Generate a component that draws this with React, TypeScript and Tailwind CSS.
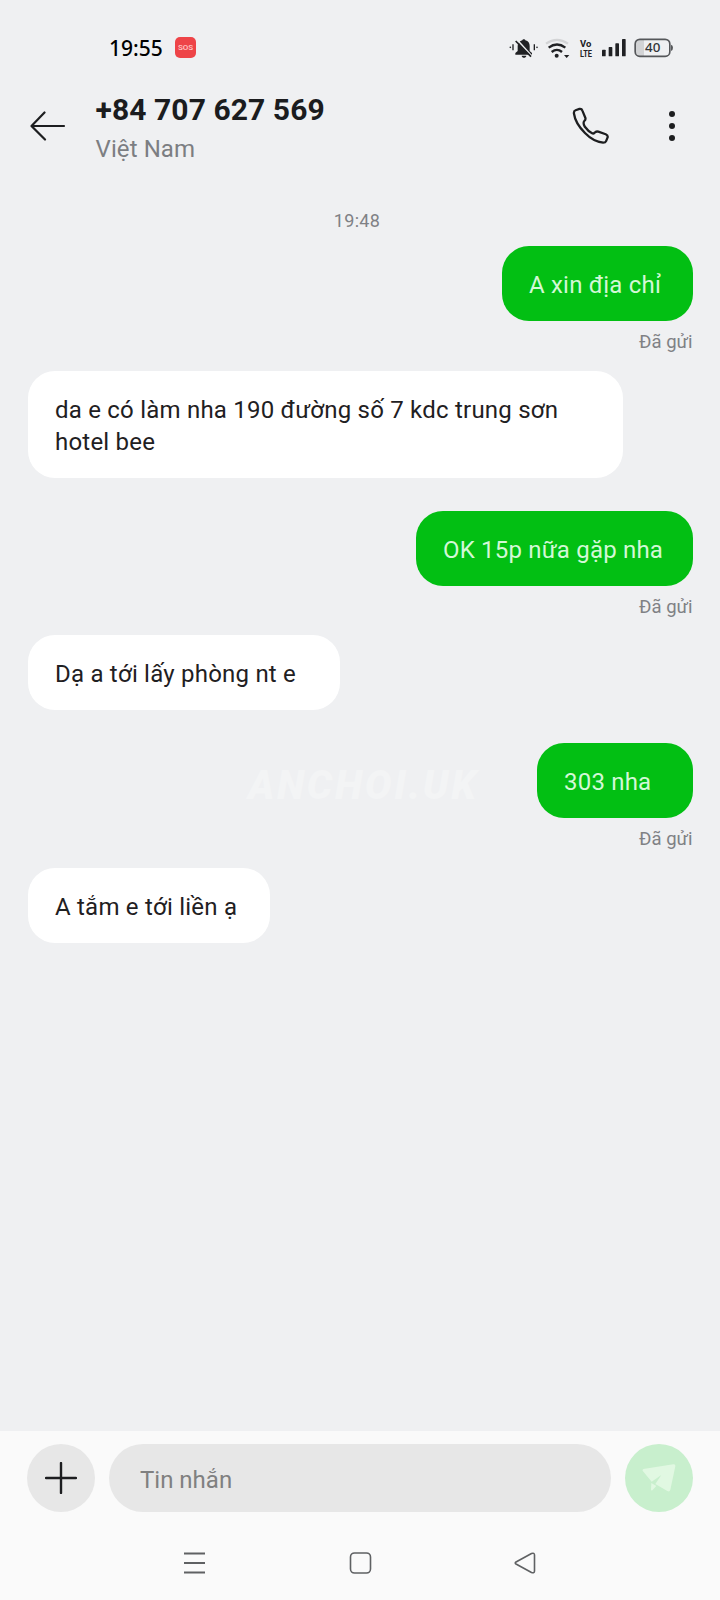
import { useState } from 'react'

type Message = { id: number; text: string; mine: boolean; bubble: string; gap: string }

const messages: Message[] = [
  { id: 1, text: 'A xin địa chỉ', mine: true, bubble: 'w-[191px]', gap: 'mt-[14px]' },
  { id: 2, text: 'da e có làm nha 190 đường số 7 kdc trung sơn hotel bee', mine: false, bubble: 'w-[595px]', gap: 'mt-[17px]' },
  { id: 3, text: 'OK 15p nữa gặp nha', mine: true, bubble: 'w-[277px]', gap: 'mt-[33px]' },
  { id: 4, text: 'Dạ a tới lấy phòng nt e', mine: false, bubble: 'w-[312px]', gap: 'mt-[16px]' },
  { id: 5, text: '303 nha', mine: true, bubble: 'w-[156px]', gap: 'mt-[33px]' },
  { id: 6, text: 'A tắm e tới liền ạ', mine: false, bubble: 'w-[242px]', gap: 'mt-[17px]' },
]

function StatusBar() {
  return (
    <div className="flex h-[68px] items-end pb-[8px] pl-[109px] pr-[46px]">
      <span className="w-[66px] font-['Noto_Sans'] text-[21px] font-medium leading-[24px] text-black">19:55</span>
      <span className="mb-[2px] flex size-[21px] items-center justify-center rounded-[5px] bg-[#ee4448] text-[8px] font-medium text-[#ffc9c9]">SOS</span>
      <div className="ml-auto flex h-[24px] items-center">
        {/* muted bell */}
        <svg className="h-[20px] w-[29px]" viewBox="58 54 87 60" fill="#202124">
          <path d="M77 104v-5l7-6V78c0-9 6-15 14-17 1-4 8-4 9 0 9 2 13 9 13 17v15l7 6v5z" />
          <path d="M96 107h14c-1 8-13 8-14 0z" />
          <path d="M83 60l46 51" stroke="#eff0f2" strokeWidth="5" />
          <path d="M78 63l46 47" stroke="#202124" strokeWidth="5" />
          <path d="M70 73v18M134 73v18" stroke="#202124" strokeWidth="4" />
          <circle cx="62" cy="82" r="2.5" />
          <circle cx="142" cy="82" r="2.5" />
        </svg>
        {/* wifi */}
        <svg className="ml-[7px] h-[20px] w-[26px]" viewBox="167 50 78 60" fill="none" strokeWidth="7">
          <path d="M170 67q33-23 66 0" stroke="#d3d4d6" />
          <path d="M178 79q25-19 50 0" stroke="#202124" />
          <path d="M187 92q16-13 31 0" stroke="#202124" />
          <circle cx="202" cy="103" r="6" fill="#202124" />
          <path d="M224 101h16l-8 9z" fill="#202124" />
        </svg>
        <svg className="ml-[7px] h-[28px] w-[16px]" viewBox="265 41 48 84" fill="#202124" fontFamily="Roboto, sans-serif" fontWeight="700">
          <text x="271" y="81" fontSize="28" textLength="34" lengthAdjust="spacingAndGlyphs">Vo</text>
          <text x="271" y="109" fontSize="28" textLength="36" lengthAdjust="spacingAndGlyphs">LTE</text>
        </svg>
        {/* signal */}
        <svg className="ml-[7px] h-[20px] w-[26px]" viewBox="334 54 78 60" fill="#202124">
          <rect x="337" y="89" width="11" height="20" rx="2" />
          <rect x="357" y="81" width="11" height="28" rx="2" />
          <rect x="377" y="70" width="11" height="39" rx="2" />
          <rect x="397" y="57" width="11" height="52" rx="2" />
        </svg>
        {/* battery */}
        <svg className="ml-[7px] h-[20px] w-[40px]" viewBox="432 54 120 60">
          <path d="M448 58h14v50h-14q-12 0-12-12V70q0-12 12-12z" fill="#d2d3d5" />
          <rect x="435.500" y="58" width="104" height="51" rx="14" fill="none" stroke="#55575a" strokeWidth="5" />
          <path d="M543 74q6 1 6 9t-6 10z" fill="#55575a" />
          <text x="465" y="97" fontSize="37" fontWeight="500" fill="#333538" fontFamily="Noto Sans, sans-serif" textLength="46" lengthAdjust="spacingAndGlyphs">40</text>
        </svg>
      </div>
    </div>
  )
}

function Header() {
  return (
    <header className="flex h-[104px] items-start pl-[30px] pr-[42px] pt-[20px]">
      <button className="mt-[22px]" aria-label="Quay lại">
        <svg className="h-[32px] w-[36px]" viewBox="0 0 36 32" fill="none" stroke="#1d1e20" strokeWidth="2.200" strokeLinecap="round" strokeLinejoin="round">
          <path d="M14.500 2.500L1.500 16l13.500 13.500M1.500 16H34" />
        </svg>
      </button>
      <div className="ml-[29.500px]">
        <h1 className="text-[30px] font-bold leading-[44px] tracking-[0.080px] text-[#1b1c1e]">+84 707 627 569</h1>
        <p className="text-[24px] leading-[34px] tracking-[0.1px] text-[#7c7e82]">Việt Nam</p>
      </div>
      <button className="ml-auto mt-[19px]" aria-label="Gọi">
        <svg className="size-[37px]" viewBox="245 260 114 114" fill="none" stroke="#1d1e20" strokeWidth="7" strokeLinejoin="round">
          <path d="M256 270L268 266Q275 265 277 271L286 293Q288 299 283 303Q278 308 284 320Q295 335 307 341Q311 343 315 339Q319 334 326 336L349 344Q356 347 355 353L350 365Q348 370 341 370Q310 366 285 340Q255 310 251 280Q250 272 256 270Z" />
        </svg>
      </button>
      <button className="ml-[57px] mt-[20px] flex w-[12px] flex-col items-center gap-[6px] pt-[3px]" aria-label="Thêm">
        <span className="size-[6px] rounded-full bg-[#1d1e20]" />
        <span className="size-[6px] rounded-full bg-[#1d1e20]" />
        <span className="size-[6px] rounded-full bg-[#1d1e20]" />
      </button>
    </header>
  )
}

function Bubble({ message }: { message: Message }) {
  if (message.mine) {
    return (
      <div className={`flex flex-col items-end ${message.gap}`}>
        <div className={`${message.bubble} h-[75px] whitespace-nowrap rounded-[27px] bg-[#02bf13] pl-[27.500px] pt-[23px] text-[24px] leading-[32px] tracking-[0.2px] text-[#d3f8d6]`}>
          {message.text}
        </div>
        <span className="mt-[9px] text-[18.500px] leading-[24px] text-[#7f8185]">Đã gửi</span>
      </div>
    )
  }
  return (
    <div className={message.gap}>
      <div className={`${message.bubble} rounded-[27px] bg-white pb-[20px] pl-[27.500px] pr-[27px] pt-[23px] text-[24px] leading-[32px] tracking-[0.220px] text-[#1f2022]`}>
        {message.text}
      </div>
    </div>
  )
}

function Composer() {
  const [draft, setDraft] = useState('')
  return (
    <div className="flex gap-[14px] px-[27px] pt-[13px]">
      <button className="flex size-[68px] items-center justify-center rounded-full bg-[#e7e7e7]" aria-label="Đính kèm">
        <svg className="size-[32px]" viewBox="0 0 32 32" stroke="#1d1e20" strokeWidth="2.400" strokeLinecap="round">
          <path d="M16 1v30M1 16h30" />
        </svg>
      </button>
      <input
        value={draft}
        onChange={e => setDraft(e.target.value)}
        placeholder="Tin nhắn"
        className="h-[68px] w-[502px] rounded-full bg-[#e7e7e7] pl-[31px] pt-[3px] text-[24px] placeholder-[#808080] outline-none"
      />
      <button className="flex size-[68px] items-center justify-center rounded-full bg-[#c8efcd]" aria-label="Gửi">
        <svg className="h-[30px] w-[36px]" viewBox="846 129 108 90" fill="#e1f8e2">
          <path d="M853 147l90-14q7-1 6 6l-15 70q-2 8-9 4l-36-21 18-27-29 20-26-31q-4-5 1-7z" />
          <path d="M877 189l15 9-12 13q-4 2-4-3z" />
        </svg>
      </button>
    </div>
  )
}

function NavBar() {
  return (
    <nav className="mt-[39px] flex items-center pl-[183px]">
      <svg className="size-[24px]" viewBox="0 0 24 24" stroke="#5f6163" strokeWidth="1.800">
        <path d="M1 2.500h21M1 12h21M1 21.500h21" />
      </svg>
      <svg className="ml-[141px] size-[24px]" viewBox="0 0 24 24" fill="none" stroke="#5f6163" strokeWidth="1.600">
        <rect x="2.500" y="2" width="20" height="20" rx="4" />
      </svg>
      <svg className="ml-[141px] size-[24px]" viewBox="0 0 24 24" fill="none" stroke="#5f6163" strokeWidth="1.600" strokeLinejoin="round">
        <path d="M3 11L18.500 2.500Q21.500 1.500 21.500 4V20Q21.500 22.500 18.500 21.500L3 13Q1.500 12 3 11Z" />
      </svg>
    </nav>
  )
}

export default function App() {
  return (
    <div className="flex h-[1600px] w-[720px] flex-col bg-[#eff0f2] font-[Roboto,sans-serif]">
      <StatusBar />
      <Header />
      <main className="relative flex-1 px-[27.500px] pt-[36px]">
        <p className="pr-[6px] text-center text-[18px] leading-[26px] tracking-[0.300px] text-[#7f8185]">19:48</p>
        <div className="-mt-[2px]">
          {messages.map(m => (
            <Bubble key={m.id} message={m} />
          ))}
        </div>
        {/* faint watermark behind the thread */}
        <span className="pointer-events-none absolute left-[248px] top-[594px] text-[40px] font-black italic leading-[40px] tracking-[2.600px] text-[#f3f4f5]">ANCHOI.UK</span>
      </main>
      <footer className="h-[169px] bg-[#fafafa]">
        <Composer />
        <NavBar />
      </footer>
    </div>
  )
}
